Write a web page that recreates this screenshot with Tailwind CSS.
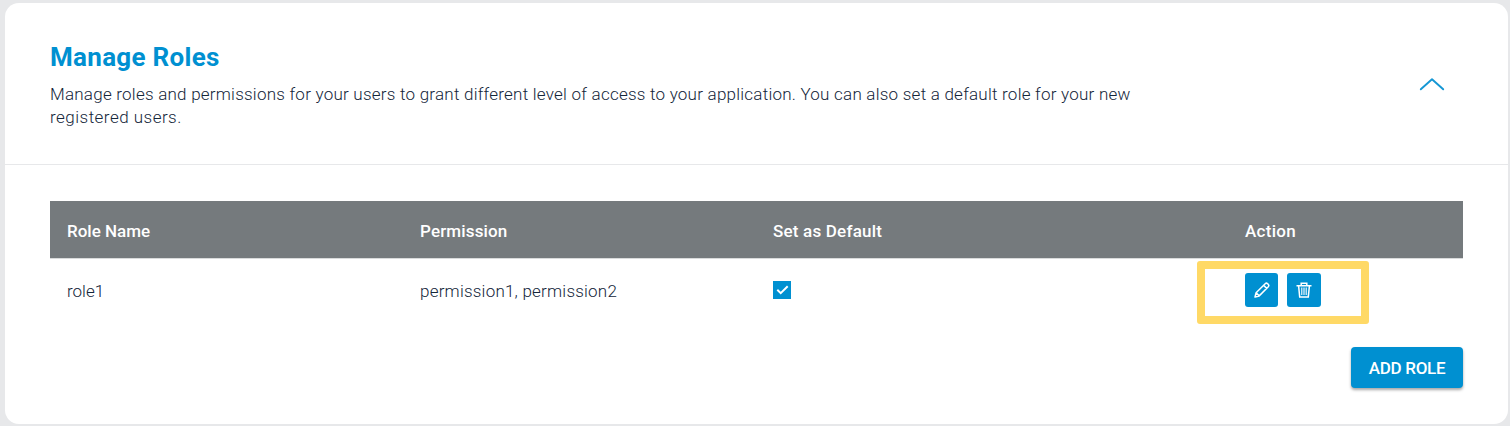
<!DOCTYPE html>
<html lang="en">
<head>
<meta charset="utf-8">
<title>Manage Roles</title>
<script src="https://cdn.jsdelivr.net/npm/@tailwindcss/browser@4"></script>
</head>
<body class="h-[426px] overflow-hidden bg-[#e7e8ea] pt-[3px] pl-[5px] pr-[2px] font-['Roboto',sans-serif] text-[17px] text-[#14263a]">
<main class="h-[421px] rounded-[14px] bg-white">
  <header class="flex h-[162px] justify-between border-b border-[#e7e8ea] pt-[38px] pl-[45px]">
    <div>
      <h1 class="text-[26px] leading-8 font-bold tracking-[0.3px] whitespace-nowrap text-[#0090d1]">Manage Roles</h1>
      <p class="mt-[10px] whitespace-nowrap leading-[23px] font-light"><span class="tracking-[0.235px]">Manage roles and permissions for your users to grant different level of access to your application. You can also set a default role for your new</span><br><span class="tracking-[0.48px]">registered users.</span></p>
    </div>
    <svg class="mt-[36px] mr-[63px] h-[14px] w-[26px]" viewBox="0 0 26 14" fill="none" stroke="#1597d4" stroke-width="1.9" stroke-linecap="round" stroke-linejoin="round"><path d="M1.8 12.3 13 2.2 24.2 12.3"/></svg>
  </header>
  <section class="pt-[36px] pr-[45px] pl-[45px]">
    <div class="grid h-[58px] grid-cols-[353px_353px_472px_1fr] items-center border-b border-[#d9dbdc] bg-[#757a7d] pt-[4px] pl-[17px] font-medium whitespace-nowrap text-white">
      <span>Role Name</span><span class="tracking-[0.15px]">Permission</span><span class="tracking-[0.2px]">Set as Default</span><span class="tracking-[0.3px]">Action</span>
    </div>
    <div class="relative grid h-[64px] grid-cols-[353px_353px_472px_1fr] items-center pl-[17px] font-light whitespace-nowrap">
      <span class="pt-[2px]">role1</span><span class="pt-[2px] tracking-[0.22px]">permission1, permission2</span>
      <span><svg class="-mt-[2px] block size-[18px] bg-[#0090d1]" viewBox="0 0 18 18" fill="none" stroke="#fff" stroke-width="2"><path d="m4.3 8.8 3.4 3.3 7-6.8"/></svg></span>
      <div class="-mt-[2px] flex gap-[9px]">
        <button class="grid h-[34px] w-[33px] place-items-center rounded-[3px] bg-[#0090d1]" aria-label="Edit">
          <svg class="size-4" viewBox="0 0 16 16" fill="none" stroke="#fff" stroke-width="1.5" stroke-linejoin="round"><path d="M1 15 2.1 10.8 11.2 1.7Q12.4.6 13.6 1.7L14.3 2.4Q15.4 3.6 14.3 4.8L5.2 13.9ZM9.6 3.3 12.7 6.4M2.1 10.8 5.2 13.9"/></svg>
        </button>
        <button class="grid h-[34px] w-[34px] place-items-center rounded-[3px] bg-[#0090d1]" aria-label="Delete">
          <svg class="size-4" viewBox="0 0 16 16" fill="none" stroke="#fff" stroke-width="1.5"><path d="M.5 3.8H15.5M5.2 3.8V1.2H10.8V3.8M2.6 3.8 3.7 15.1H12.3L13.4 3.8"/><path stroke-width="1.1" d="M5.8 5.5V13M8 5.5V13M10.2 5.5V13"/></svg>
        </button>
      </div>
      <div class="absolute top-[2px] left-[1147px] h-[63px] w-[172px] rounded-[3px] border-[8px] border-[#ffd966]"></div>
    </div>
    <div class="flex justify-end pt-[24px]">
      <button class="h-[41px] w-[112px] rounded-[4px] bg-[#0090d1] pt-[2px] text-[17px] font-medium tracking-[-0.3px] whitespace-nowrap text-white shadow-[0_2px_3px_rgba(0,0,0,0.35)]">ADD ROLE</button>
    </div>
  </section>
</main>
</body>
</html>
